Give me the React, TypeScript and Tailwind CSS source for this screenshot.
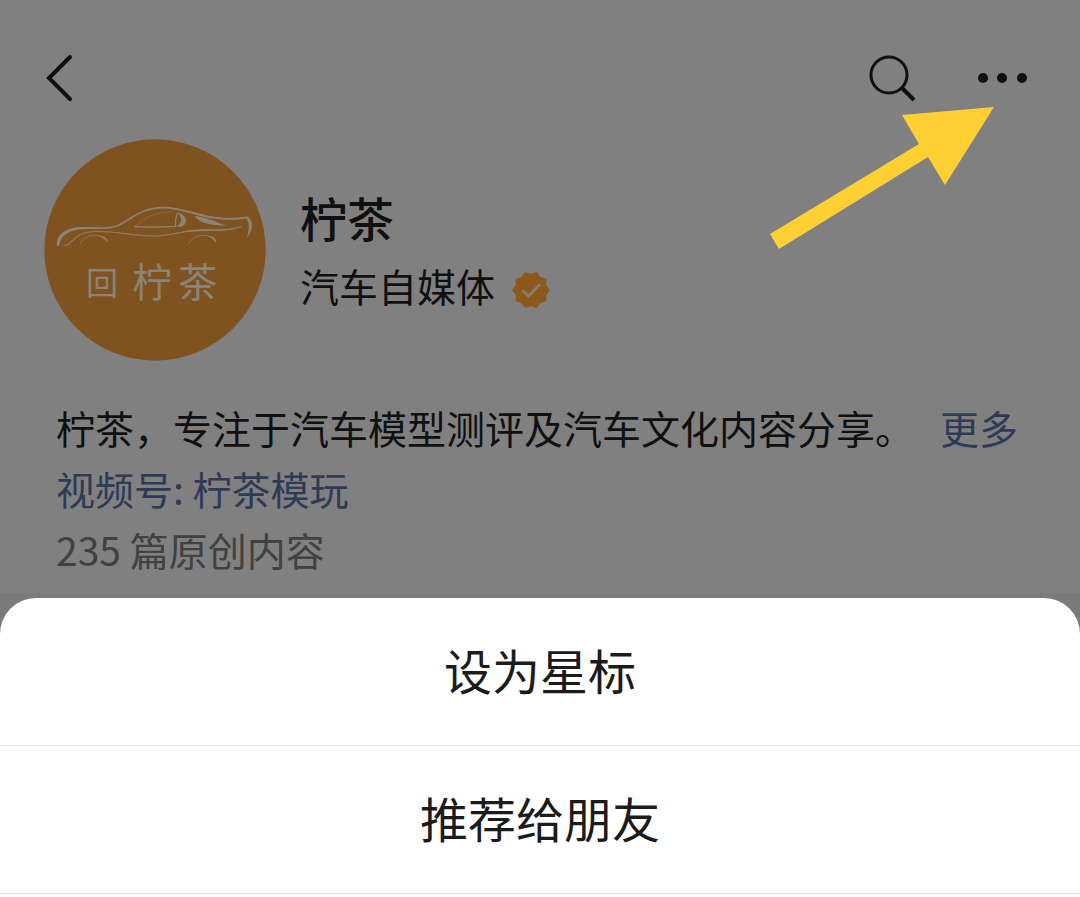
import React from "react";

const badgePoints = Array.from({ length: 20 }, (_, i) => {
  const radius = i % 2 === 0 ? 52 : 44;
  const angle = ((18 * i - 72) * Math.PI) / 180;
  return `${(60 + radius * Math.cos(angle)).toFixed(1)},${(60 + radius * Math.sin(angle)).toFixed(1)}`;
}).join(" ");

function Avatar() {
  return (
    <svg viewBox="43 27 666 666" className="size-[222px] shrink-0" role="img" aria-label="柠茶">
      <circle cx="376" cy="360" r="332" fill="#7f5220" />
      <g fill="none" stroke="#8b8377" strokeLinecap="round" strokeLinejoin="round">
        <path d="M86 346 C86 312 118 296 155 294 C198 292 228 300 264 287 C300 272 332 233 400 233 C455 233 500 256 560 264 C600 268 630 266 655 262" strokeWidth="5" />
        <path d="M103 347 C128 346 130 310 185 305 C250 300 300 318 370 318 C430 318 450 303 500 302 C550 301 600 303 635 290" strokeWidth="4" opacity="0.8" />
        <path d="M315 290 C345 262 375 246 430 245" strokeWidth="2" opacity="0.7" />
        <path d="M315 290 C350 293 400 291 438 289" strokeWidth="4" />
        <path d="M444 249 C437 262 437 275 438 288" strokeWidth="4" />
        <path d="M152 340 C162 312 215 306 233 334 M478 340 C492 310 542 308 558 334" strokeWidth="3" opacity="0.7" />
      </g>
      <g fill="#8b8377">
        <path d="M82 348 C78 308 115 293 155 291 C185 290 205 293 225 296 C180 296 150 295 125 304 C100 315 92 328 89 346 Z" />
        <path d="M444 248 C472 252 474 280 460 288 C452 291 445 291 438 289 C455 284 462 266 444 248 Z" />
        <path d="M494 257 C530 261 560 275 590 287 C555 285 512 284 494 257 Z" />
        <path d="M420 234 C470 238 510 256 560 262 C600 268 630 264 655 261 C625 273 580 270 545 265 C500 258 470 241 420 234 Z" />
        <path d="M645 262 C672 256 674 300 652 323 C659 298 662 275 645 262 Z" />
        <path d="M205 317 C222 316 237 326 233 338 C226 326 218 321 205 317 Z M530 317 C547 316 563 326 559 338 C551 326 543 321 530 317 Z" />
        <path d="M450 308 C480 296 530 298 620 298 C570 305 500 301 450 308 Z" />
      </g>
      <g fill="#8b8377" fontWeight="400" className="font-['Noto_Sans_CJK_SC',sans-serif]">
        <text x="169" y="496" fontSize="96">回</text>
        <text x="308" y="500" fontSize="118">柠</text>
        <text x="445" y="500" fontSize="118">茶</text>
      </g>
    </svg>
  );
}

function VerifiedBadge() {
  return (
    <svg viewBox="0 0 120 120" className="size-10" aria-hidden="true">
      <polygon points={badgePoints} fill="#8c591c" stroke="#8c591c" strokeWidth="8" strokeLinejoin="round" />
      <path d="M35 61 L52 78 L87 43" fill="none" stroke="#858079" strokeWidth="8" />
    </svg>
  );
}

export default function App() {
  return (
    <div className="relative flex min-h-screen flex-col overflow-hidden bg-[#7b7b7b] font-['Noto_Sans_CJK_SC',sans-serif] text-[#101010]">
      <main className="h-[593px] bg-[#808080]">
        <header className="flex h-[139px] items-start justify-between pt-[54px] pr-[52px] pl-[44px]">
          <button type="button" aria-label="返回" className="h-12 w-8">
            <svg viewBox="0 0 32 48" className="h-12 w-8" fill="none" stroke="currentColor" strokeWidth="4" strokeLinecap="round">
              <path d="M26 3 L5 24 L26 45" strokeLinejoin="miter" />
            </svg>
          </button>
          <div className="flex items-center gap-[62px]">
            <button type="button" aria-label="搜索" className="size-12">
              <svg viewBox="0 0 48 48" className="size-12" fill="none" stroke="currentColor" strokeWidth="3">
                <circle cx="21" cy="21" r="18" />
                <path d="M34 34 L46 46" strokeWidth="4" />
              </svg>
            </button>
            <button type="button" aria-label="更多操作" className="h-12 w-[50px]">
              <svg viewBox="0 0 50 48" className="h-12 w-[50px]" fill="currentColor">
                <circle cx="5" cy="24" r="5" />
                <circle cx="24" cy="24" r="5" />
                <circle cx="44" cy="24" r="5" />
              </svg>
            </button>
          </div>
        </header>

        <section className="flex items-center gap-[34px] pl-[44px]">
          <Avatar />
          <div>
            <h1 className="text-[47px] leading-[70px] font-medium">柠茶</h1>
            <div className="flex items-end gap-4">
              <p className="text-[39px] leading-[66px]">汽车自媒体</p>
              <div className="pb-2">
                <VerifiedBadge />
              </div>
            </div>
          </div>
        </section>

        <section className="px-14 pt-9 text-[39px] leading-[61px] whitespace-nowrap">
          <p className="flex gap-[26px]">
            <span>柠茶，专注于汽车模型测评及汽车文化内容分享。</span>
            <a href="#more" className="text-[#2f3a56]">更多</a>
          </p>
          <p>
            <a href="#channel" className="text-[#2f3a56]">视频号: 柠茶模玩</a>
          </p>
          <p className="text-[#414141]">235 篇原创内容</p>
        </section>
      </main>

      <div className="mt-[5px] flex flex-1 flex-col rounded-t-[36px] bg-white text-5xl text-[#1b1b1b]">
        <button type="button" className="h-[148px] border-b border-[#e5e5e5] pb-1.5">设为星标</button>
        <button type="button" className="h-[148px] border-b border-[#e5e5e5] pb-1.5">推荐给朋友</button>
      </div>

      <svg viewBox="0 0 224 142" className="pointer-events-none absolute top-[107px] right-[86px] h-[142px] w-[224px]" aria-hidden="true">
        <polygon points="224,0 175,78 158,50 9,142 0,127 149,37 132,8" fill="#ffd033" />
      </svg>
    </div>
  );
}
